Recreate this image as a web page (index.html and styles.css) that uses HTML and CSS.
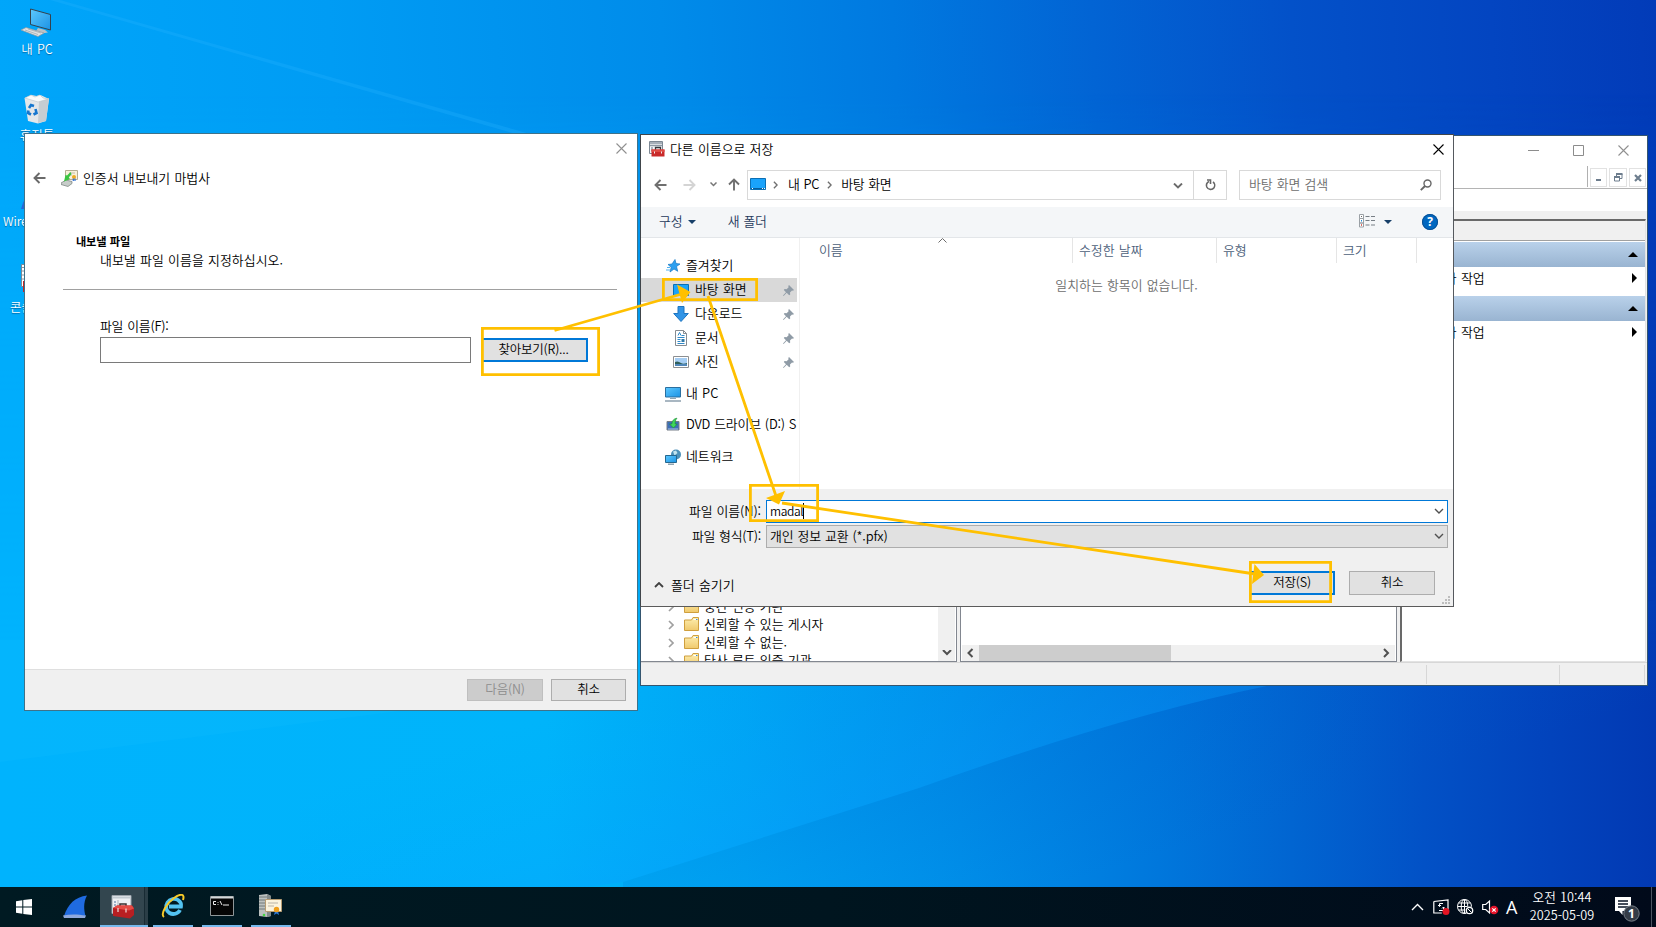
FILE: index.html
```html
<!DOCTYPE html>
<html lang="ko">
<head>
<meta charset="utf-8">
<title>바탕 화면</title>
<link rel="stylesheet" href="styles.css">
</head>
<body>
<svg width="0" height="0" class="defs">
  <defs>
    <linearGradient id="scr" x1="0" y1="0" x2="1" y2="1"><stop offset="0" stop-color="#5cc8ff"/><stop offset="1" stop-color="#1c93e4"/></linearGradient>
    <linearGradient id="fold" x1="0" y1="0" x2="0" y2="1"><stop offset="0" stop-color="#fdeeb0"/><stop offset="1" stop-color="#f0c96c"/></linearGradient>
  </defs>
  <symbol id="pin" viewBox="0 0 11 11"><path d="M6 0l5 5-1 .8-1-.3-2 2 .2 2-1 .8L3.700 7.800.6 11 0 10.400 3 7.200.8 5l.8-1 2 .2 2-2-.3-1.200z" fill="#8f9ba6"/></symbol>
  <symbol id="folder" viewBox="0 0 15 14"><path d="M.5 3h7l1.500-2.500h5.500v13H.5z" fill="url(#fold)" stroke="#cf9f3e"/><path d="M9.500 2.500h4" stroke="#fff"/><path d="M12 2.500h1.500" stroke="#3b8ad8"/></symbol>
  <symbol id="gt" viewBox="0 0 6 10"><path d="M1 1l4 4-4 4" fill="none" stroke="currentColor" stroke-width="1.700"/></symbol>
  <symbol id="down" viewBox="0 0 10 6"><path d="M1 1l4 4 4-4" fill="none" stroke="currentColor" stroke-width="1.400"/></symbol>
  <symbol id="arrow" viewBox="0 0 13 12"><path d="M12.500 6H1.500M6.500 1l-5 5 5 5" fill="none" stroke="currentColor" stroke-width="1.900"/></symbol>
  <symbol id="cross" viewBox="0 0 11 11"><path d="M.5.5l10 10M10.500.5l-10 10" fill="none" stroke="currentColor" stroke-width="1.100"/></symbol>
  <symbol id="toolbox" viewBox="0 0 16 16"><path d="M.5.5h13v12H.5z" fill="#f4f6f8" stroke="#7c8894"/><path d="M1 2h12M1 4.500h12" stroke="#8b98a4" stroke-width="1.300"/><path d="M2 7h2M2 9h2" stroke="#5f7386"/><path d="M6.500 9V6.500h5V9" fill="none" stroke="#33383d" stroke-width="1.300"/><path d="M2.500 8.500h13V15.500h-13z" fill="#c92a2a"/><path d="M2.500 8.500h13v2.500h-13z" fill="#df4b44"/><path d="M5.500 10.500v2M12.500 10.500v2" stroke="#eee"/></symbol>
</svg>

<svg class="wallpaper" viewBox="0 0 1656 927" preserveAspectRatio="none">
  <defs>
    <linearGradient id="wtop" gradientUnits="userSpaceOnUse" x1="0" y1="90" x2="1656" y2="0">
      <stop offset="0" stop-color="#00a6fa"/><stop offset=".2" stop-color="#009cf4"/><stop offset=".4" stop-color="#008cea"/><stop offset=".54" stop-color="#0079e0"/><stop offset=".66" stop-color="#0264d4"/><stop offset=".78" stop-color="#0351c9"/><stop offset=".9" stop-color="#0345c1"/><stop offset="1" stop-color="#023bb8"/>
    </linearGradient>
    <linearGradient id="wlow" gradientUnits="userSpaceOnUse" x1="0" y1="0" x2="1656" y2="0">
      <stop offset="0" stop-color="#00b3fd"/><stop offset=".33" stop-color="#00b4fa"/><stop offset=".45" stop-color="#00a5f4"/><stop offset=".58" stop-color="#008fe9"/><stop offset=".7" stop-color="#0077dc"/><stop offset=".78" stop-color="#0165d1"/><stop offset=".86" stop-color="#0251c6"/><stop offset=".93" stop-color="#0244bd"/><stop offset="1" stop-color="#0239b3"/>
    </linearGradient>
    <linearGradient id="wfade" x1="0" y1="0" x2="0" y2="1"><stop offset=".1" stop-color="#000"/><stop offset=".7" stop-color="#fff"/></linearGradient>
    <mask id="wmask"><rect width="1656" height="927" fill="url(#wfade)"/></mask>
    <linearGradient id="wray" gradientUnits="userSpaceOnUse" x1="890" y1="610" x2="945" y2="785"><stop offset="0" stop-color="#00a4ff" stop-opacity="0"/><stop offset="1" stop-color="#0a9cff" stop-opacity=".32"/></linearGradient>
    <linearGradient id="wshade" gradientUnits="userSpaceOnUse" x1="945" y1="780" x2="985" y2="910"><stop offset="0" stop-color="#0058c8" stop-opacity=".14"/><stop offset="1" stop-color="#0058c8" stop-opacity="0"/></linearGradient>
  </defs>
  <rect width="1656" height="927" fill="url(#wtop)"/>
  <rect width="1656" height="927" fill="url(#wlow)" mask="url(#wmask)"/>
  <path d="M300 560H1500L1267 686Q1120 716 919 788L623 882 300 927z" fill="url(#wray)"/>
  <path d="M1267 686Q1120 716 919 788L623 882V927H1656V600z" fill="url(#wshade)"/>
  <path d="M60 0L530 134V138L50 0z" fill="#28b4ff" opacity=".28"/>
  <path d="M0 762L400 711H25V640H0z" fill="#14bfff" opacity=".2"/>
</svg>

<section class="shortcut s-pc">
  <svg width="32" height="30" viewBox="0 0 32 30"><path d="M9.500 1l20 5.500V22L9.500 16.500z" fill="url(#scr)" stroke="#34424e"/><path d="M17 20l7 2 3 2.500-7 1-5-2.500z" fill="#b9c2c8"/><path d="M0 22l5-2.500 18 5.500-6 3.500z" fill="#dfe2e3" stroke="#8f989e" stroke-width=".7"/><path d="M4 22l13 4.500M7 21l13 4" stroke="#a3abb0" stroke-width=".8"/></svg>
  <span>내 PC</span>
</section>
<section class="shortcut s-bin">
  <svg width="28" height="30" viewBox="0 0 28 30"><path d="M1.500 4l7-3 5 1 4-1 8.500 4-3 22-8 2.500-10-2.500z" fill="#e3e7ea"/><path d="M16 7l10-3-3 23-8 2z" fill="#c6cdd2"/><path d="M2 4l6-3 4 2 5-2 3 3 5 1-10 3z" fill="#f8fafa" stroke="#bac4ca" stroke-width=".6"/><g fill="none" stroke="#1677cf" stroke-width="2.600"><path d="M6 14l2-3 3 1"/><path d="M12.500 15l1 4-3 1.500"/><path d="M8 20.500l-3-1.500.5-2.500"/></g></svg>
  <span>휴지통</span>
</section>
<section class="shortcut s-shark">
  <svg width="30" height="30" viewBox="0 0 30 30"><path d="M0 29C5 12 12 4 26 1c-5 9-3 17-1 28z" fill="#2468d8"/></svg>
  <span>Wireshark</span>
</section>
<section class="shortcut s-console">
  <svg width="32" height="30" viewBox="0 0 32 30"><path d="M.5.500h24v22H.5z" fill="#fff" stroke="#7c8894"/><path d="M1 3.500h4M1 7h4M1 11h4M1 15h4" stroke="#8793a0"/><path d="M2 17h28v11H2z" fill="#c52828"/></svg>
  <span>콘솔1</span>
</section>

<!-- management console behind the dialogs -->
<section class="window console">
  <header class="console-caption">
    <svg width="11" height="11" viewBox="0 0 11 11"><path d="M0 5.500h11" stroke="#8c8c8c"/></svg>
    <svg width="11" height="11" viewBox="0 0 11 11"><path d="M.5.5h10v10H.5z" fill="none" stroke="#8c8c8c"/></svg>
    <svg class="gray" width="11" height="11"><use href="#cross"/></svg>
  </header>
  <div class="mdi">
    <i class="mdi-bar"></i>
    <b><svg width="16" height="17" viewBox="0 0 16 17"><path d="M5 11h5" stroke="#6d7d8d" stroke-width="2"/></svg></b>
    <b><svg width="16" height="17" viewBox="0 0 16 17"><path d="M6.500 7V5h5.500v4.500h-2M4.500 8h5v4h-5z" fill="none" stroke="#6d7d8d"/><path d="M6 5h6.500M4 8h6" stroke="#6d7d8d" stroke-width="1.800"/></svg></b>
    <b><svg width="16" height="17" viewBox="0 0 16 17"><path d="M5 6l6 6M11 6l-6 6" stroke="#6d7d8d" stroke-width="2.200"/></svg></b>
  </div>
  <div class="menu-gap"></div>
  <div class="console-body">
    <div class="tree">
      <div class="tree-list">
        <p><svg class="twist"><use href="#gt"/></svg><svg class="tf"><use href="#folder"/></svg>중간 인증 기관</p>
        <p><svg class="twist"><use href="#gt"/></svg><svg class="tf"><use href="#folder"/></svg>신뢰할 수 있는 게시자</p>
        <p><svg class="twist"><use href="#gt"/></svg><svg class="tf"><use href="#folder"/></svg>신뢰할 수 없는.</p>
        <p><svg class="twist"><use href="#gt"/></svg><svg class="tf"><use href="#folder"/></svg>타사 루트 인증 기관</p>
      </div>
      <div class="vscroll"><svg width="10" height="6" viewBox="0 0 10 6"><path d="M1 0l4 4 4-4" fill="none" stroke="#505050" stroke-width="2"/></svg></div>
    </div>
    <div class="results">
      <div class="hscroll">
        <svg width="17" height="16" viewBox="0 0 17 16"><path d="M10.500 4l-4 4 4 4" fill="none" stroke="#505050" stroke-width="2"/></svg>
        <i></i>
        <svg width="17" height="16" viewBox="0 0 17 16"><path d="M6 4l4 4-4 4" fill="none" stroke="#505050" stroke-width="2"/></svg>
      </div>
    </div>
    <div class="actions">
      <div class="actions-title"></div>
      <div class="group"><svg width="10" height="5"><path d="M0 5l5-5 5 5z"/></svg></div>
      <div class="task"><span>추가 작업</span><svg width="5" height="10"><path d="M0 0l5 5-5 5z"/></svg></div>
      <div class="group"><svg width="10" height="5"><path d="M0 5l5-5 5 5z"/></svg></div>
      <div class="task"><span>추가 작업</span><svg width="5" height="10"><path d="M0 0l5 5-5 5z"/></svg></div>
    </div>
  </div>
  <footer class="status"><i></i><i></i><i></i></footer>
</section>

<!-- certificate export wizard -->
<section class="window wizard">
  <header class="wiz-caption"><svg class="gray" width="11" height="11"><use href="#cross"/></svg></header>
  <div class="wiz-title">
    <svg class="back" width="13" height="12"><use href="#arrow"/></svg>
    <svg width="17" height="17" viewBox="0 0 17 17"><path d="M4.500.5h12v9h-12z" fill="#f8f1da" stroke="#b5ad93"/><path d="M8 3h6M8 5h3" stroke="#c3bda9"/><circle cx="13" cy="7" r="2" fill="#efaa22"/><path d="M12.300 8.500v2.500M14 8.500v2.500" stroke="#2f6fd2" stroke-width="1.200"/><path d="M0 13l5-3 6 1.500v2L7 16.500 0 14.500z" fill="#c6ccc9" stroke="#727d78" stroke-width=".7"/><path d="M9.500 2L6 5.500 4.500 5 3 11.500l6-2.500L7.800 7.500 10.500 4z" fill="#3bc441"/></svg>
    <span>인증서 내보내기 마법사</span>
  </div>
  <div class="wiz-head">
    <h2>내보낼 파일</h2>
    <p>내보낼 파일 이름을 지정하십시오.</p>
  </div>
  <div class="wiz-form">
    <label>파일 이름(F):</label>
    <div class="wiz-row"><div class="input"></div><button class="btn default browse">찾아보기(R)...</button></div>
  </div>
  <footer class="wiz-foot"><button class="btn off">다음(N)</button><button class="btn">취소</button></footer>
</section>

<!-- save as dialog -->
<section class="window save">
  <header class="save-title">
    <svg width="16" height="16"><use href="#toolbox"/></svg><span>다른 이름으로 저장</span>
    <svg class="x" width="11" height="11"><use href="#cross"/></svg>
  </header>
  <nav class="path">
    <svg class="p-back" width="13" height="12"><use href="#arrow"/></svg>
    <svg class="p-fwd" width="13" height="12"><use href="#arrow"/></svg>
    <svg class="p-hist" width="7" height="5" viewBox="0 0 7 5"><path d="M.5.5l3 3 3-3" fill="none" stroke="#777" stroke-width="1.500"/></svg>
    <svg class="p-up" width="12" height="13" viewBox="0 0 12 13"><path d="M6 12.500V1.500M1 6.500l5-5 5 5" fill="none" stroke="#6f6f6f" stroke-width="1.900"/></svg>
    <div class="address">
      <svg width="16" height="12" viewBox="0 0 16 12"><path d="M.5.5h15v11H.5z" fill="#1aa3fb" stroke="#0b6fb4"/><path d="M1 10.500h14" stroke="#075f9d"/><path d="M2 10.500h1M12 10.500h1M14 10.500h1" stroke="#fff"/></svg>
      <svg class="sep1" width="5" height="8" viewBox="0 0 6 10"><use href="#gt"/></svg><span>내 PC</span>
      <svg class="sep2" width="5" height="8" viewBox="0 0 6 10"><use href="#gt"/></svg><span>바탕 화면</span>
      <svg class="drop" width="10" height="6" viewBox="0 0 10 6"><path d="M1 .5l4 4 4-4" fill="none" stroke="#6b6b6b" stroke-width="1.900"/></svg>
      <div class="reload"><svg width="11" height="12" viewBox="0 0 11 12"><path d="M4 2.500C1.500 3.500 1 6 1.800 8c1.400 3 5.500 3.200 7.200.7C10.400 6.500 9.500 4 8 3M2 1h3.500v4" fill="none" stroke="#666" stroke-width="1.600"/></svg></div>
    </div>
    <div class="search"><span>바탕 화면 검색</span><svg width="12" height="12" viewBox="0 0 12 12"><circle cx="7.500" cy="4.500" r="3.500" fill="none" stroke="#666" stroke-width="1.400"/><path d="M5 7L.8 11.200" stroke="#666" stroke-width="1.900"/></svg></div>
  </nav>
  <div class="toolbar">
    <span>구성</span><svg class="tri" width="8" height="4"><path d="M0 0h8l-4 4z" fill="#173f68"/></svg>
    <span class="newf">새 폴더</span>
    <svg class="view" width="17" height="14" viewBox="0 0 17 14"><path d="M.5.500h4v4h-4zM.5 4.500h4v4.500h-4zM.5 9h4v4h-4z" fill="#fff" stroke="#9aa0a5"/><path d="M2 2.500h1" stroke="#666"/><path d="M2 6.700h1" stroke="#1e88d6" stroke-width="1.500"/><path d="M2 11h1" stroke="#cf3a2e" stroke-width="1.500"/><path d="M6.500 2.500h4M12 2.500h4M6.500 6.500h4M12 6.500h4M6.500 11h4M12 11h4" stroke="#777e85"/></svg>
    <svg class="tri2" width="8" height="4"><path d="M0 0h8l-4 4z" fill="#173f68"/></svg>
    <b class="help">?</b>
  </div>
  <div class="browser">
    <aside class="places">
      <p class="root"><svg width="16" height="16" viewBox="0 0 16 16"><path d="M10 1.500l1 4 4 .5-3.500 2.500 1.200 4.800-3.700-2.300-4 3 1.200-4.700L3 6.500l4-.5z" fill="#2b9ff0" stroke="#1678c4" stroke-width=".7"/><path d="M2 9.500h3M1 12h4" stroke="#4eb0f0"/></svg><span>즐겨찾기</span></p>
      <p class="sel"><svg width="16" height="12" viewBox="0 0 16 12"><path d="M.5.500h15v11H.5z" fill="#1aa3fb" stroke="#0b6fb4"/></svg><span>바탕 화면</span><svg class="pin"><use href="#pin"/></svg></p>
      <p><svg width="16" height="16" viewBox="0 0 16 16"><path d="M5 .5h6v7h4.300L8 15.500.7 7.500H5z" fill="#3194e6" stroke="#1c74c0"/></svg><span>다운로드</span><svg class="pin"><use href="#pin"/></svg></p>
      <p><svg width="16" height="16" viewBox="0 0 16 16"><path d="M2.500.5h8l3 3v12h-11z" fill="#fff" stroke="#868b90"/><path d="M10.500.5v3h3" fill="none" stroke="#868b90"/><path d="M5 5.500l1.500-3L8 5.500M8.500 5.500h3M4.500 7.500h7M4.500 9.500h3M4.500 11.500h3M4.500 13.500h7" fill="none" stroke="#2f88c8"/><path d="M8.500 9h3v3h-3z" fill="#2f78a8"/></svg><span>문서</span><svg class="pin"><use href="#pin"/></svg></p>
      <p><svg width="16" height="12" viewBox="0 0 16 12"><path d="M.5.500h15v11H.5z" fill="#fff" stroke="#8c8f92"/><path d="M2 2h12v8H2z" fill="#a5cdf3"/><path d="M2 6c2-1 4-.5 6 1s4 .5 6 0v1H2z" fill="#2f5f5a"/><path d="M2 8h12v2H2z" fill="#4f86b8"/></svg><span>사진</span><svg class="pin"><use href="#pin"/></svg></p>
      <p class="root gap"><svg width="16" height="16" viewBox="0 0 16 16"><path d="M.5 1.500h15v9.500H.5z" fill="url(#scr)" stroke="#2b6f9f"/><path d="M5 12.500h6" stroke="#8fa5b3"/><path d="M0 15h16" stroke="#8499a8" stroke-width="1.400"/></svg><span>내 PC</span></p>
      <p class="root gap dvd"><svg width="16" height="16" viewBox="0 0 16 16"><path d="M2 4.500h12v8.500H2z" fill="#3f6fb8" stroke="#777f88"/><path d="M3 12h10" stroke="#a9c4e4"/><path d="M8.500 11L4.500 7h2.300C7 3.500 9 1.500 12 1.200 10.300 3 10 5 10.200 7h2z" fill="#3fd75a" stroke="#178a30" stroke-width=".6"/></svg><span>DVD 드라이브 (D:) S</span></p>
      <p class="root gap"><svg width="16" height="16" viewBox="0 0 16 16"><circle cx="11" cy="5.500" r="5" fill="#4b90b8"/><path d="M8 2.500l3-1 1.500 2.500-3 2.500z" fill="#c2e4ef"/><path d="M.5 6.500h11v7H.5z" fill="url(#scr)" stroke="#25678f"/><path d="M3 15.200h6" stroke="#7f96a5" stroke-width="1.300"/></svg><span>네트워크</span></p>
    </aside>
    <div class="files">
      <div class="cols"><span class="c1">이름<svg class="sort" width="9" height="5" viewBox="0 0 9 5"><path d="M.5 4.500l4-4 4 4" fill="none" stroke="#6b6b6b"/></svg></span><span class="c2">수정한 날짜</span><span class="c3">유형</span><span class="c4">크기</span></div>
      <p class="empty">일치하는 항목이 없습니다.</p>
    </div>
  </div>
  <div class="save-foot">
    <div class="field"><label class="lname">파일 이름(N):</label><div class="combo focus"><span class="typed">madal</span><svg width="10" height="6"><use href="#down"/></svg></div></div>
    <div class="field"><label>파일 형식(T):</label><div class="combo"><span>개인 정보 교환 (*.pfx)</span><svg width="10" height="6"><use href="#down"/></svg></div></div>
    <div class="save-actions">
      <div class="fold"><svg width="10" height="6" viewBox="0 0 10 6"><path d="M1 5l4-4 4 4" fill="none" stroke="#404040" stroke-width="1.800"/></svg><span>폴더 숨기기</span></div>
      <button class="btn default">저장(S)</button><button class="btn">취소</button>
    </div>
  </div>
  <svg class="grip" width="8" height="8" viewBox="0 0 8 8"><path d="M6 0h2v2H6zM3 3h2v2H3zM6 3h2v2H6zM0 6h2v2H0zM3 6h2v2H3zM6 6h2v2H6z" fill="#bdbdbd"/></svg>
</section>

<!-- step markers drawn over the windows -->
<svg class="marks" width="1656" height="927" viewBox="0 0 1656 927">
  <g fill="none" stroke="#ffc000" stroke-width="2.800">
    <path d="M482.400 328.400h116.200v46.200H482.400zM663.400 279.400h93.200v20.200h-93.200zM750.400 485.400h67.200v35.200h-67.200zM1250.400 562.400h80.200v39.200h-80.200z"/>
    <path d="M554.500 330.500L680 294.500M708 296l68 200M782 503l473 71"/>
  </g>
  <path d="M677 284.500l13.500 7.500-8.500 11zM766 498l19-7-6 13.500zM1254.500 564l9.500 11-12 9z" fill="#ffc000"/>
</svg>

<footer class="taskbar">
  <div class="task-item start"><svg width="16" height="16" viewBox="0 0 16 16"><path d="M0 2.200L6.300 1.200V7.500H0zM7.300 1L16 0v7.500H7.300zM0 8.500h6.300v6.300L0 13.800zM7.300 8.500H16V16l-8.700-1.100z" fill="#fff"/></svg></div>
  <div class="task-item shark"><svg width="25" height="24" viewBox="0 0 25 24"><path d="M1 21C5 9 12 2 24 0.500 20 8 21 15 22.500 21z" fill="#1f6be0"/><path d="M0 20.500c7-1.500 14-1.500 23 0L22 23H1z" fill="#8fa9dc"/></svg></div>
  <div class="task-item on"><svg width="24" height="24" viewBox="0 0 24 24"><path d="M1 .5h19v18H1z" fill="#eef0f3" stroke="#9ba3ab"/><path d="M1 2.500h19" stroke="#c3cad1" stroke-width="2"/><path d="M3 7h2M3 10h2M3 13h2" stroke="#4a6d99"/><path d="M7 5v13" stroke="#a9b3bd"/><path d="M9 12V9h6v3" fill="none" stroke="#3a3030" stroke-width="1.500"/><path d="M2 13l4-2.500h15l2 3V20l-4 3.500L2 21z" fill="#b81f22"/><path d="M2 13l4-2.500h15l2 3-5 2z" fill="#e54a44"/><path d="M7 13v4M15 13.500v4" stroke="#f0dddd" stroke-width="1.200"/></svg></div>
  <div class="task-item run"><svg width="24" height="24" viewBox="0 0 24 24"><path d="M19 16c-2 4-7 5-10.500 3S4 12.500 6.500 8.500 14 4 17 6s3.500 4 3 6.500H8" fill="none" stroke="#53c3f1" stroke-width="3.800"/><path d="M3 23C-1 20 6 9 13 4S24 0 22 6" fill="none" stroke="#f8ca28" stroke-width="2"/></svg></div>
  <div class="task-item run"><svg width="24" height="20" viewBox="0 0 24 20"><path d="M.5.500h23v19H.5z" fill="#050505" stroke="#8f9698"/><path d="M1 1.500h22" stroke="#d3d8da" stroke-width="2"/><path d="M6 5.500H3.500v3H6M8 6v.8M8 8v.8M10 5l2 4M13 9h6" fill="none" stroke="#eee"/></svg></div>
  <div class="task-item run"><svg width="25" height="24" viewBox="0 0 25 24"><path d="M1 1l8-1 4 2v20l-4 1-8-1z" fill="#bcc1bf"/><path d="M1 3h8M1 6h8M1 9h8M1 12h8M1 15h6" stroke="#737b7b"/><path d="M9 0v23l4-1V2z" fill="#818989"/><path d="M7.500 5.500h16v12h-16z" fill="#fbf3dd" stroke="#b79c72"/><path d="M10 9h10M10 12h6" stroke="#b9b3a6"/><path d="M17 17l-1 4 2.500-1.500L21 21l-1-4" fill="#2b78d8"/><circle cx="18.500" cy="15.500" r="2.700" fill="#f0a01d"/><circle cx="6" cy="21" r="1.300" fill="#44d542"/></svg></div>
  <div class="tray">
    <svg width="13" height="8" viewBox="0 0 13 8"><path d="M1 7l5.500-5.500L12 7" fill="none" stroke="#fff" stroke-width="1.400"/></svg>
    <svg class="t2" width="17" height="16" viewBox="0 0 17 16"><path d="M.8 2.500L15 1v10M.8 2.500V14h8" fill="none" stroke="#fff" stroke-width="1.200"/><path d="M10 4.500H6.500v3M10.500 8v3.500H6M5 6l1.500 1.500L8 6M9 9.500L10.500 8 12 9.500" fill="none" stroke="#fff"/><circle cx="13" cy="12.500" r="3.500" fill="#e51423"/></svg>
    <svg class="t3" width="17" height="16" viewBox="0 0 17 16"><g fill="none" stroke="#fff"><circle cx="7.500" cy="7.500" r="7"/><ellipse cx="7.500" cy="7.500" rx="3.300" ry="7"/><path d="M.5 7.500h14M1.500 4h12M1.500 11h7M7.500.5v14"/></g><circle cx="12.500" cy="11.500" r="4.300" fill="#020e1c"/><circle cx="12.500" cy="11.500" r="3.200" fill="none" stroke="#fff" stroke-width="1.300"/><path d="M10.500 9.500l4 4" stroke="#fff"/></svg>
    <svg class="t4" width="17" height="16" viewBox="0 0 17 16"><path d="M.7 5.500h3L7.500 2v12L3.700 10.500h-3z" fill="none" stroke="#fff" stroke-width="1.200"/><circle cx="12" cy="11" r="4.300" fill="#e5142b"/><path d="M10.300 9.300l3.400 3.400M13.700 9.300l-3.400 3.400" stroke="#fff" stroke-width="1.200"/></svg>
    <span class="ime">A</span>
    <div class="clock"><span>오전 10:44</span><span>2025-05-09</span></div>
    <div class="notice"><svg width="25" height="26" viewBox="0 0 25 26"><path d="M0 1h16v14h-8.500v4L4 15H0z" fill="#fff"/><path d="M3 5h10M3 8h10M3 11h10" stroke="#0a1426" stroke-width="1.300"/><circle cx="16.500" cy="17.500" r="7.700" fill="#343c47" stroke="#777f88"/></svg><b>1</b></div>
    <i class="peek"></i>
  </div>
</footer>
</body>
</html>
```
FILE: styles.css
```css
* { box-sizing: border-box; margin: 0; padding: 0; }
body {
  width: 1656px; height: 927px; overflow: hidden; position: relative;
  background: #0090ea;
  font: 350 12.900px/18px "Noto Sans CJK KR", sans-serif;
  color: #000; word-spacing: .6px;
}
svg { display: block; flex: none; }
i, b { font-style: normal; }
.defs { position: absolute; }
.wallpaper { position: absolute; left: 0; top: 0; width: 1656px; height: 927px; }

/* desktop shortcuts */
.shortcut { position: absolute; width: 74px; display: flex; flex-direction: column; align-items: center; color: #fff; font-size: 12.500px; white-space: nowrap; }
.shortcut span { line-height: 18px; text-shadow: 0 1px 1px rgba(0, 30, 70, .45); }
.s-pc { left: 0; top: 8px; gap: 2px; }
.s-bin { left: 0; top: 94px; gap: 2px; }
.s-shark { left: 3px; top: 180px; gap: 2px; align-items: flex-start; font-size: 12px; }
.s-console { left: 10px; top: 264px; gap: 4px; align-items: flex-start; }
.s-console svg { margin-left: 11px; }
.s-shark svg { margin-left: 18px; }

.window { position: absolute; background: #fff; border: 1px solid #3f7289; overflow: hidden; }
.gray { color: #909090; }
.btn { font: inherit; font-size: 12.500px; line-height: 16px; padding-bottom: 2px; border: 1px solid #adadad; background: #e1e1e1; color: #000; height: 22px; width: 76px; letter-spacing: -.2px; white-space: nowrap; }
.btn.default { border: 2px solid #0078d7; }
.btn.off { color: #8d8d8d; background: #ccc; border-color: #bfbfbf; }

/* console */
.console { left: 640px; top: 135px; width: 1008px; height: 551px; display: flex; flex-direction: column; border-color: #34556f; }
.console-caption { height: 30px; display: flex; justify-content: flex-end; align-items: center; gap: 34px; padding: 0 18px 2px 0; flex: none; }
.mdi { height: 23px; display: flex; justify-content: flex-end; gap: 2px; padding: 2px 1px 0 0; border-bottom: 1px solid #b4b4b4; flex: none; }
.mdi b { width: 17.500px; height: 19px; border: 1px solid #e2e2e2; }
.mdi-bar { width: 1px; height: 21px; background: #b0b0b0; margin-top: -2px; }
.menu-gap { height: 30px; border-bottom: 8px solid #f0f0f0; border-top: 0; flex: none; }
.console-body { flex: 1; display: flex; background: #f0f0f0; gap: 3px; min-height: 0; }
.tree { width: 316px; background: #fff; border: 1px solid #828790; border-left: 0; display: flex; }
.tree-list { flex: 1; overflow: hidden; display: flex; flex-direction: column; padding: 376px 0 0 27px; }
.tree-list p { height: 18px; flex: none; display: flex; align-items: center; white-space: nowrap; line-height: 17px; }
.twist { width: 6px; height: 10px; color: #a0a0a0; margin: 4px 10px 0 0; }
.tf { width: 15px; height: 14px; margin: 1px 5px 0 0; }
.vscroll { width: 17px; margin-right: 1px; background: #f0f0f0; display: flex; align-items: flex-end; justify-content: center; padding-bottom: 5px; }
.results { width: 437px; background: #fff; border: 1px solid #828790; display: flex; align-items: flex-end; padding: 0 1px 0; }
.hscroll { flex: 1; height: 16px; background: #f0f0f0; display: flex; }
.hscroll i { width: 192px; background: #cdcdcd; margin-right: auto; }
.actions { flex: 1; border: 2px solid #696969; border-right: 1px solid #e3e3e3; border-bottom: 1px solid #e3e3e3; background: #fff; margin-right: 1px; }
.actions-title { height: 20px; background: #f0f0f0; border-bottom: 1px solid #a0a0a0; margin-bottom: 1px; }
.group { height: 25px; background: linear-gradient(#b9d1ea, #99b4d1); display: flex; align-items: center; justify-content: flex-end; padding: 0 7px 1px 0; }
.task { height: 29px; display: flex; align-items: center; justify-content: space-between; padding: 0 8px 7px 31px; }
.task span { line-height: 17px; padding-bottom: 1px; }
.status { height: 23px; background: #f0f0f0; border-top: 1px solid #d7d7d7; display: flex; justify-content: flex-end; padding: 2px 2px 1px; flex: none; }
.status i { border-right: 1px solid #d7d7d7; width: 133px; }
.status i:last-child { width: 85px; }

/* wizard */
.wizard { left: 24px; top: 133px; width: 614px; height: 578px; display: flex; flex-direction: column; }
.wiz-caption { display: flex; justify-content: flex-end; padding: 9px 10px 0 0; height: 33px; }
.wiz-title { display: flex; align-items: center; height: 22px; padding-left: 8px; }
.wiz-title .back { color: #6a6a6a; margin-right: 15px; }
.wiz-title span { margin-left: 5px; }
.wiz-head { margin: 43px 20px 0 38px; height: 58px; border-bottom: 1px solid #a0a0a0; padding-left: 12px; }
.wiz-head h2 { font-size: 11.200px; line-height: 18px; font-weight: 700; letter-spacing: -.2px; padding-left: 1px; }
.wiz-head p { padding-left: 25px; margin-top: 1px; line-height: 17px; letter-spacing: .05px; }
.wiz-form { padding: 27px 0 0 75px; flex: 1; }
.wiz-form label { display: block; line-height: 18px; letter-spacing: -.25px; }
.wiz-row { display: flex; gap: 10px; margin-top: 2px; }
.input { width: 371px; height: 26px; border: 1px solid #7a7a7a; }
.browse { width: 107px; height: 24px; margin-top: 1px; padding-right: 2px; }
.wiz-foot { height: 41px; background: #f0f0f0; border-top: 1px solid #dfdfdf; display: flex; justify-content: flex-end; gap: 8px; padding: 9px 11px 0 0; }
.wiz-foot .btn { width: 75px; }
.wiz-foot .btn.off { width: 76px; }

/* save dialog */
.save { left: 640px; top: 134px; width: 814px; height: 473px; border-color: #40454a #55595e #5b5b5b #40454a; display: flex; flex-direction: column; }
.save-title { height: 29px; display: flex; align-items: center; padding: 0 9px 1px 8px; flex: none; }
.save-title span { margin-left: 5px; line-height: 17px; padding-bottom: 1px; }
.save-title .x { margin-left: auto; }
.path { height: 43px; display: flex; align-items: center; padding: 0 12px 2px 13px; flex: none; }
.p-back { color: #6f6f6f; }
.p-fwd { color: #d4d4d4; margin-left: 16px; transform: scaleX(-1); }
.p-hist { margin-left: 14px; }
.p-up { margin-left: 11px; }
.address { margin-left: 7px; width: 480px; height: 30px; border: 1px solid #d9d9d9; display: flex; align-items: center; padding-left: 2px; }
.address span { line-height: 16px; padding-bottom: 2px; letter-spacing: -.3px; }
.address svg { color: #6f6f6f; }
.address > svg:first-child { margin-bottom: 1px; }
.sep1 { margin: 0 10px 0 7px; }
.sep2 { margin: 0 9px 0 8px; }
.drop { margin: 2px 10px 0 auto; }
.reload { width: 33px; height: 28px; border-left: 1px solid #d9d9d9; display: flex; align-items: center; justify-content: center; }
.search { margin-left: auto; width: 202px; height: 30px; border: 1px solid #d9d9d9; display: flex; align-items: center; justify-content: space-between; padding: 0 8px 0 9px; color: #6d6d6d; letter-spacing: -.05px; }
.search span { line-height: 16px; padding-bottom: 2px; }
.toolbar { height: 31px; background: #f4f6f8; border-bottom: 1px solid #e3e6e9; display: flex; align-items: center; padding: 0 15px 2px 18px; color: #1e395b; flex: none; }
.tri { margin: 1px 0 0 5px; }
.newf { margin-left: 32px; letter-spacing: -.2px; }
.view { margin-left: auto; }
.tri2 { margin: 1px 30px 0 8px; }
.help { width: 16px; height: 16px; border-radius: 50%; background: #0067c0; color: #fff; font: 700 12px/16px "Open Sans", sans-serif; text-align: center; outline: 1px solid #0a4f92; outline-offset: -1px; margin-top: 1px; }
.browser { height: 251px; display: flex; flex: none; }
.places { width: 159px; border-right: 1px solid #f0f0f0; padding: 16px 2px 0 0; }
.places p { height: 24px; display: flex; align-items: center; padding: 0 3px 0 32px; white-space: nowrap; overflow: hidden; }
.places p span { line-height: 18px; padding-bottom: 2px; }
.places p > svg:first-child { margin-right: 6px; }
.places .root { padding: 0 0 0 24px; }
.places .root > svg:first-child { margin-right: 5px; }
.places .gap { margin-top: 7.700px; }
.places .dvd { letter-spacing: -.2px; }
.places .sel { background: #d9d9d9; }
.places .pin { width: 11px; height: 11px; margin-left: auto; }
.files { flex: 1; }
.cols { height: 25px; display: flex; color: #4c607a; line-height: 23px; }
.cols span { border-right: 1px solid #e5e5e5; padding-left: 6px; }
.cols .c1 { width: 273px; padding-left: 19px; display: flex; }
.sort { margin: 0 0 0 95px; }
.cols .c2 { width: 144px; }
.cols .c3 { width: 120px; }
.cols .c4 { width: 80px; }
.empty { text-align: center; color: #6d6d6d; padding-top: 13px; }
.save-foot { flex: 1; background: #f0f0f0; padding: 11px 5px 0 0; }
.field { display: flex; height: 23px; margin-bottom: 2px; }
.field label { width: 120px; text-align: right; line-height: 22px; letter-spacing: -.25px; }
.field .lname { letter-spacing: -.1px; }
.combo { margin-left: 5px; flex: 1; border: 1px solid #adadad; background: #e1e1e1; display: flex; justify-content: space-between; align-items: center; padding: 0 3px 1px 3px; color: #000; letter-spacing: -.15px; }
.combo svg { color: #505050; }
.combo.focus { background: #fff; border-color: #0078d7; padding-bottom: 2px; }
.typed { font-size: 12px; line-height: 16px; border-right: 1px solid #000; letter-spacing: -.4px; }
.save-actions { display: flex; align-items: center; padding: 0 13px 0 13px; height: 24px; margin-top: 23px; }
.fold { display: flex; align-items: center; margin-right: auto; padding-top: 3px; }
.fold span { margin-left: 7px; line-height: 17px; }
.save-actions .btn { width: 86px; height: 24px; margin-left: 14px; }
.save-actions .btn:last-child { width: 86px; }
.grip { position: absolute; right: 3px; bottom: 2px; }

.marks { position: absolute; left: 0; top: 0; }

/* taskbar */
.taskbar { position: absolute; left: 0; top: 887px; width: 1656px; height: 40px; background: linear-gradient(90deg, #001a22, #00151f 50%, #010a1a); display: flex; color: #fff; }
.task-item { width: 40px; display: flex; align-items: center; justify-content: center; margin-right: 9px; border-bottom: 2px solid transparent; }
.start { width: 48px; margin: 0; padding-top: 2px; }
.shark { width: 52px; margin: 0; padding: 2px 0 0 2px; }
.on { width: 48px; margin-right: 5px; background: linear-gradient(90deg, #33464f 44px, #182b34 44px, #182b34 45px, #2b3e47 45px); border-color: #76b9ed; padding: 2px 3px 0 0; }
.run { border-color: #76b9ed; }
.run svg { margin-left: -1px; }
.tray { margin-left: auto; display: flex; align-items: center; }
.t2 { margin-left: 9px; }
.t3 { margin-left: 7px; }
.t4 { margin-left: 8px; }
.ime { font: 18px/40px "Open Sans", sans-serif; margin-left: 7px; width: 12px; }
.clock { width: 80px; margin-left: 4px; display: flex; flex-direction: column; align-items: center; line-height: 18px; font-size: 12.700px; padding-bottom: 2px; }
.notice { position: relative; margin-left: 13px; padding-top: 4px; }
.notice b { position: absolute; left: 13px; top: 13px; font: 700 12px/17px "Open Sans", sans-serif; }
.peek { width: 1px; height: 40px; background: #4b5461; margin: 0 4px 0 11px; }
```
